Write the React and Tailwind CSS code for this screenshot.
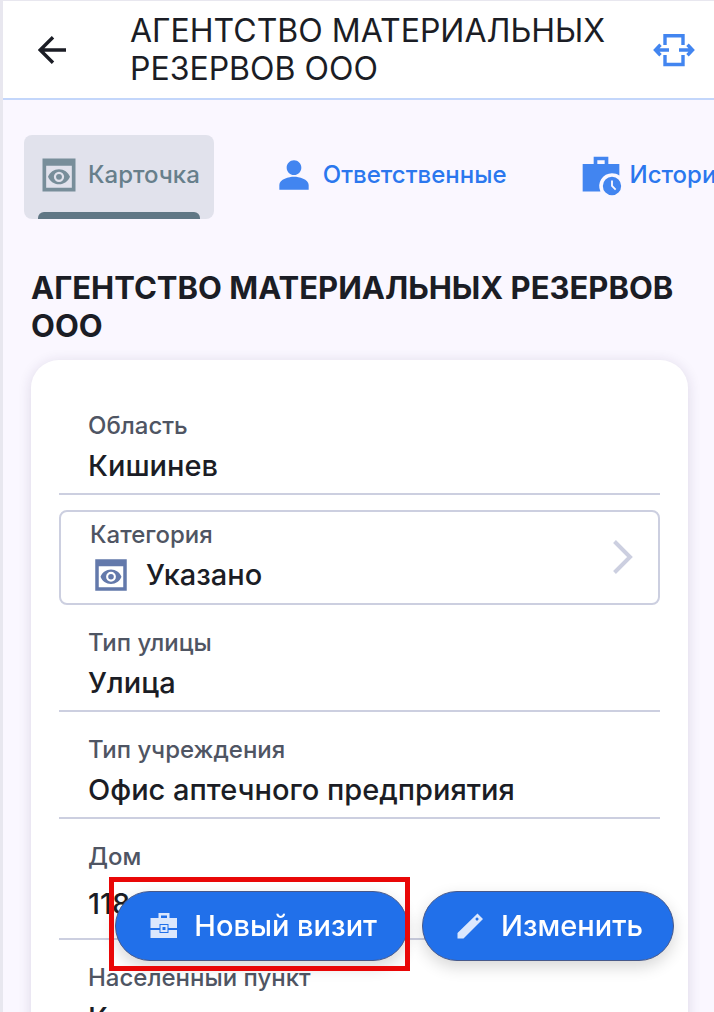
import { useState } from "react";

const tabs = [
    { id: "card", label: "Карточка", Icon: PreviewIcon },
    { id: "people", label: "Ответственные", Icon: PersonIcon },
    { id: "history", label: "История", Icon: HistoryIcon },
];

function ArrowBackIcon({ className }) {
    return (
        <svg viewBox="0 0 28 28" className={className} fill="none" stroke="currentColor" strokeWidth="3.4" aria-hidden="true">
            <path d="M28 14H2.5M15 1.2 2.2 14 15 26.8" />
        </svg>
    );
}

function ExpandIcon({ className }) {
    return (
        <svg viewBox="0 0 42 34" className={className} fill="none" stroke="currentColor" strokeWidth="3.4" aria-hidden="true">
            <path d="M12 12V2.800h18V12M12 22v9.500h18V22" />
            <path d="M3 17h13M7.500 11.800 2.500 17l5 5.200M39 17H26M34.500 11.800l5 5.200-5 5.200" />
        </svg>
    );
}

function PreviewIcon({ className }) {
    return (
        <svg viewBox="0 0 24 24" className={className} fill="currentColor" aria-hidden="true">
            <path fillRule="evenodd" d="M3 3h18v18H3zM5 7v12h14V7z" />
            <path
                fillRule="evenodd"
                d="M12 8.900c-2.730 0-5.060 1.660-6 4.100.940 2.440 3.270 4.100 6 4.100s5.060-1.660 6-4.100c-.940-2.440-3.270-4.100-6-4.100zm0 6.900a2.800 2.800 0 1 1 0-5.600 2.800 2.800 0 0 1 0 5.600z"
            />
            <circle cx="12" cy="13" r="1.600" />
        </svg>
    );
}

function PersonIcon({ className }) {
    return (
        <svg viewBox="0 0 24 24" className={className} fill="currentColor" aria-hidden="true">
            <path d="M12 12c2.210 0 4-1.790 4-4s-1.790-4-4-4-4 1.790-4 4 1.790 4 4 4zm0 1c-2.670 0-8 1.340-8 4.500V20h16v-2.500c0-3.160-5.330-4.500-8-4.500z" />
        </svg>
    );
}

function HistoryIcon({ className }) {
    return (
        <svg viewBox="0 0 24 24" className={className} fill="currentColor" aria-hidden="true">
            <path
                fillRule="evenodd"
                d="M18 11c1.490 0 2.870.470 4 1.260V6h-6V2H8v4H2v15h9.680A7 7 0 0 1 18 11zM10 4h4v2h-4z"
            />
            <path fillRule="evenodd" d="M18 13a5 5 0 1 0 0 10 5 5 0 0 0 0-10zm1.650 7.350L17.500 18.200V15h1v2.790l1.850 1.850z" />
        </svg>
    );
}

function BriefcaseIcon({ className }) {
    return (
        <svg viewBox="0 0 36 36" className={className} fill="currentColor" aria-hidden="true">
            <path fillRule="evenodd" d="M12.500 5h11v5H31v10h-8.500v-4h-9v4h-9V10h8zM15 7.500V10h6V7.500z" />
            <path d="M4.500 22h9v3h9v-3H31v8H4.500z" />
            <path fillRule="evenodd" d="M14.500 17h7v7h-7zM16.500 19v3h3v-3z" />
        </svg>
    );
}

function PencilIcon({ className }) {
    return (
        <svg viewBox="0 0 36 36" className={className} fill="currentColor" aria-hidden="true">
            <path fillRule="evenodd" d="M4.500 25 24.500 5.500 30 11 10.500 30.500h-6zM24 9.200l-1.800 1.900 1.800 1.900 1.900-1.900z" />
        </svg>
    );
}

function ChevronIcon({ className }) {
    return (
        <svg viewBox="0 0 22 36" className={className} fill="none" stroke="currentColor" strokeWidth="4" aria-hidden="true">
            <path d="M2.500 2.500 18 18 2.500 33.500" />
        </svg>
    );
}

function Field({ label, value, tall }) {
    return (
        <div className="border-b-2 border-[#cccfe0] pt-[22px] pb-[7px] pl-[29px]">
            <dt className="text-2xl leading-8 font-medium text-[#4f5563]">{label}</dt>
            <dd className={`mt-1 flex items-center text-[29px] font-medium text-[#1b1d25] ${tall ? "h-[54px]" : "h-10"}`}>
                {value}
            </dd>
        </div>
    );
}

function ActionButton({ label, Icon }) {
    return (
        <button
            type="button"
            className="flex h-[70px] items-center gap-3 rounded-full border border-[#47598a] bg-[#2170ea] px-[30px] text-[29px] font-medium whitespace-nowrap text-white shadow-[0_6px_16px_rgba(0,0,0,0.16)]"
        >
            <Icon className="size-9 text-[#dbe7fd]" />
            {label}
        </button>
    );
}

export default function App() {
    const [active, setActive] = useState("card");

    return (
        <div className="flex h-screen flex-col overflow-hidden border-l-3 border-[#e8e7ef] bg-[#faf7ff] font-['Inter',sans-serif]">
            <header className="flex shrink-0 items-center border-t border-b-2 border-t-[#e8e7ef] border-b-[#c3d6fb] bg-white pt-[11px] pr-[19px] pb-[10px] pl-[35px]">
                <button type="button" aria-label="Назад" className="text-[#1b1d25]">
                    <ArrowBackIcon className="size-7" />
                </button>
                <h1 className="ml-16 flex-1 text-[32px] leading-[38px] text-[#1b1d25]">
                    АГЕНТСТВО МАТЕРИАЛЬНЫХ РЕЗЕРВОВ ООО
                </h1>
                <button type="button" aria-label="Развернуть" className="text-[#4285f0]">
                    <ExpandIcon className="h-[34px] w-[42px]" />
                </button>
            </header>

            <main className="min-h-0 flex-1 overflow-hidden">
                <nav className="flex gap-[45px] overflow-hidden pt-[35px] pl-[21px]">
                    {tabs.map(({ id, label, Icon }) => (
                        <button
                            key={id}
                            type="button"
                            onClick={() => setActive(id)}
                            className={`relative flex h-[84px] shrink-0 items-center gap-[7px] rounded-lg pr-[14px] pb-1 pl-[13px] text-2xl font-medium ${
                                active === id ? "bg-[#e1e2ec] text-[#677f8b]" : "text-[#2b77ee]"
                            }`}
                        >
                            <Icon className={`size-11 ${active === id ? "text-[#788e9a]" : "text-[#4285f0]"}`} />
                            {label}
                            {active === id && (
                                <span className="absolute inset-x-[14px] bottom-0 h-[7px] rounded-t-md bg-[#607785]" />
                            )}
                        </button>
                    ))}
                </nav>

                <h2 className="mt-[50px] pr-6 pl-7 text-[31px] leading-[38px] font-bold text-[#1b1d25]">
                    АГЕНТСТВО МАТЕРИАЛЬНЫХ РЕЗЕРВОВ ООО
                </h2>

                <section className="mt-[15px] mr-[26px] ml-7 rounded-[28px] bg-white px-7 pt-7 pb-40 shadow-[0_2px_14px_rgba(40,30,80,0.14)]">
                    <dl>
                        <Field label="Область" value="Кишинев" />
                    </dl>
                    <button
                        type="button"
                        className="mt-[15px] flex w-full items-center justify-between rounded-lg border-2 border-[#cccfe0] pt-[7px] pr-6 pb-2 pl-[29px] text-left"
                    >
                        <span>
                            <span className="block text-2xl leading-8 font-medium text-[#4f5563]">Категория</span>
                            <span className="mt-1 flex h-10 items-center gap-[14px] text-[29px] font-medium text-[#1b1d25]">
                                <PreviewIcon className="size-[42px] text-[#6379ab]" />
                                Указано
                            </span>
                        </span>
                        <ChevronIcon className="h-9 w-[22px] text-[#cccfe0]" />
                    </button>
                    <dl>
                        <Field label="Тип улицы" value="Улица" />
                        <Field label="Тип учреждения" value="Офис аптечного предприятия" />
                        <Field label="Дом" value="118" tall />
                        <Field label="Населенный пункт" value="Кишинев" />
                    </dl>
                </section>
            </main>

            <div className="fixed right-10 bottom-[51px] flex gap-[14px]">
                <div className="relative">
                    <ActionButton label="Новый визит" Icon={BriefcaseIcon} />
                    <span className="pointer-events-none absolute -top-[14px] -right-[2px] -bottom-[10px] -left-[6px] border-[5px] border-[#e90707]" />
                </div>
                <ActionButton label="Изменить" Icon={PencilIcon} />
            </div>
        </div>
    );
}
